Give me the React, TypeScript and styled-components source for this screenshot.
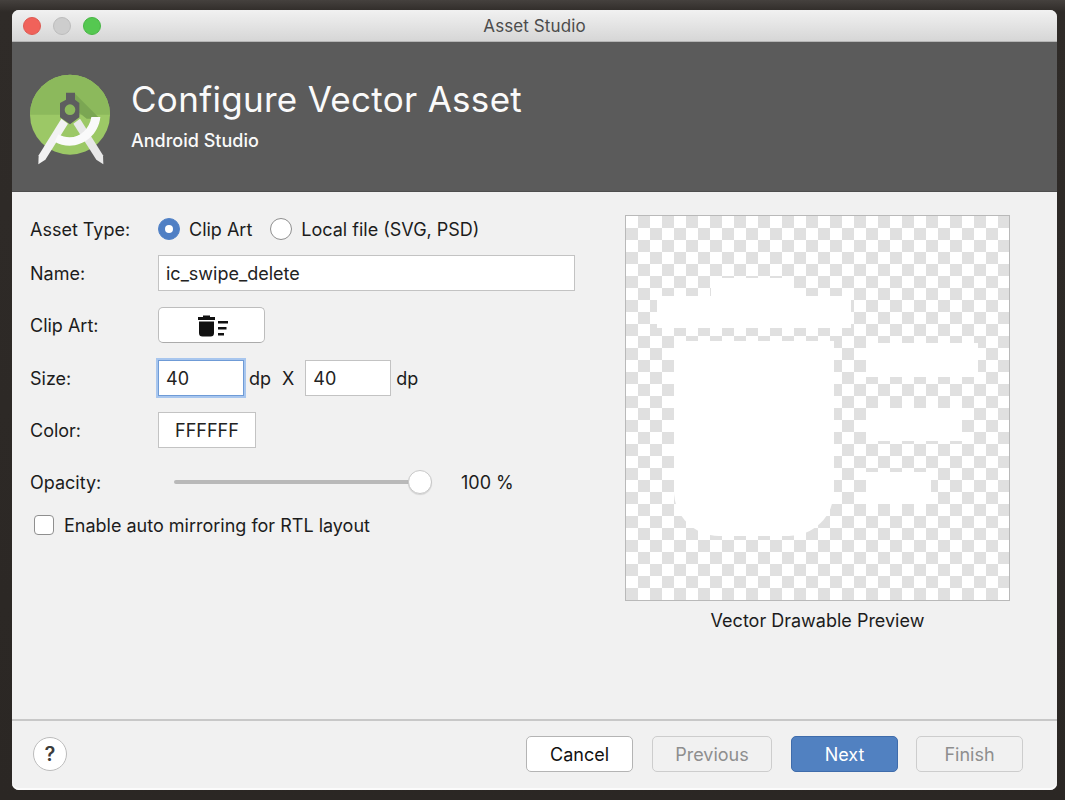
import React from "react";
import styled, { createGlobalStyle } from "styled-components";

const GlobalStyle = createGlobalStyle`
  html, body {
    margin: 0;
    background: #2b2724;
    font-family: "Inter", "Liberation Sans", sans-serif;
  }
`;

const Screen = styled.div`
  width: 1065px;
  height: 800px;
  padding: 10px 8px 10px 12px;
  box-sizing: border-box;
  background: linear-gradient(#45413e, #2f2b28 12px, #2b2724);
  overflow: hidden;
`;

const Window = styled.div`
  height: 780px;
  display: flex;
  flex-direction: column;
  border-radius: 7px;
  overflow: hidden;
  background: #f1f1f1;
  box-shadow: inset 0 -2px 0 #fbfbfb;
`;

const TitleBar = styled.div`
  height: 32px;
  flex: none;
  display: flex;
  align-items: center;
  position: relative;
  padding-left: 11px;
  gap: 12px;
  background: linear-gradient(#f1f1f1, #d6d6d6);
  border-bottom: 1px solid #b5b5b5;
  box-sizing: border-box;
`;

const TrafficLight = styled.span<{ $fill: string; $edge: string }>`
  width: 18px;
  height: 18px;
  box-sizing: border-box;
  border-radius: 50%;
  background: ${(p) => p.$fill};
  border: 1px solid ${(p) => p.$edge};
`;

const WindowTitle = styled.div`
  position: absolute;
  left: 0;
  right: 0;
  text-align: center;
  font-size: 17px;
  color: #4c4c4c;
  letter-spacing: 0.1px;
`;

const Header = styled.div`
  height: 150px;
  flex: none;
  display: flex;
  align-items: center;
  gap: 11px;
  padding-left: 8px;
  box-sizing: border-box;
  background: #5b5b5b;
  border-bottom: 1px solid #4e4e4e;
`;

const HeaderText = styled.div`
  display: flex;
  flex-direction: column;
  color: #fafafa;
  margin-top: -4px;
`;

const HeaderTitle = styled.div`
  font-size: 35px;
  line-height: 44px;
  letter-spacing: 0.3px;
`;

const HeaderSub = styled.div`
  font-size: 18px;
  line-height: 22px;
  margin-top: 9px;
  font-weight: 500;
`;

const Main = styled.div`
  flex: 1;
  display: grid;
  grid-template-columns: 613px 385px;
  padding-top: 23px;
  border-bottom: 2px solid #c8c8c8;
`;

const Form = styled.div`
  display: flex;
  flex-direction: column;
  padding-left: 18px;
`;

const Row = styled.div<{ $h: number; $gap: number }>`
  height: ${(p) => p.$h}px;
  margin-top: ${(p) => p.$gap}px;
  display: flex;
  align-items: center;
  font-size: 18px;
  color: #1c1c1c;
`;

const Label = styled.label`
  width: 128px;
  flex: none;
`;

const Radio = styled.span<{ $on?: boolean }>`
  width: 22px;
  height: 22px;
  flex: none;
  box-sizing: border-box;
  border-radius: 50%;
  background: ${(p) => (p.$on ? "#4f7fc4" : "#fff")};
  border: 1px solid ${(p) => (p.$on ? "#5484c8" : "#8f8f8f")};
  display: flex;
  align-items: center;
  justify-content: center;
  margin-right: 9px;
  &::after {
    content: "";
    width: 8px;
    height: 8px;
    border-radius: 50%;
    background: ${(p) => (p.$on ? "#fff" : "transparent")};
  }
`;

const RadioText = styled.span`
  margin-right: 18px;
`;

const Field = styled.div<{ $w: number; $focus?: boolean; $center?: boolean }>`
  width: ${(p) => p.$w}px;
  height: 36px;
  flex: none;
  box-sizing: border-box;
  background: #fff;
  border: 1px solid ${(p) => (p.$focus ? "#6f9bd6" : "#c3c3c3")};
  box-shadow: ${(p) => (p.$focus ? "0 0 0 2px #a8c6ee" : "none")};
  display: flex;
  align-items: center;
  justify-content: ${(p) => (p.$center ? "center" : "flex-start")};
  padding-left: ${(p) => (p.$center ? 0 : 7)}px;
  font-size: 18px;
  color: #222;
`;

const SizeUnit = styled.span<{ $after: number }>`
  margin: 0 ${(p) => p.$after}px 0 5px;
`;

const ClipButton = styled.button`
  width: 107px;
  height: 36px;
  padding: 0;
  box-sizing: border-box;
  background: #fff;
  border: 1px solid #bdbdbd;
  border-bottom-color: #ababab;
  border-radius: 5px;
  display: flex;
  align-items: center;
  justify-content: center;
`;

const SliderWrap = styled.div`
  width: 258px;
  margin-left: 16px;
  height: 28px;
  position: relative;
  display: flex;
  align-items: center;
`;

const SliderTrack = styled.div`
  width: 100%;
  height: 4px;
  border-radius: 2px;
  background: #b9b9b9;
`;

const SliderThumb = styled.div`
  position: absolute;
  right: 0;
  top: 2px;
  width: 24px;
  height: 24px;
  box-sizing: border-box;
  border-radius: 50%;
  background: #fff;
  border: 1px solid #c8c8c8;
  box-shadow: 0 1px 1px rgba(0, 0, 0, 0.12);
`;

const SliderValue = styled.span`
  margin-left: 29px;
`;

const Checkbox = styled.span`
  width: 20px;
  height: 20px;
  flex: none;
  margin: 0 10px 0 4px;
  box-sizing: border-box;
  background: #fff;
  border: 1px solid #8f8f8f;
  border-radius: 4px;
`;

const PreviewColumn = styled.div`
  display: flex;
  flex-direction: column;
  align-items: center;
`;

const Preview = styled.div`
  width: 385px;
  height: 386px;
  box-sizing: border-box;
  position: relative;
  border: 1px solid #b9b9b9;
  background: conic-gradient(#e0e0e0 25%, #fff 0 50%, #e0e0e0 0 75%, #fff 0) 0 0 / 24px 24px;
`;

const PreviewShape = styled.svg`
  position: absolute;
  left: 0;
  top: 0;
`;

const Caption = styled.div`
  font-size: 18px;
  color: #1c1c1c;
  margin-top: 9px;
`;

const Footer = styled.div`
  height: 69px;
  flex: none;
  display: flex;
  align-items: center;
  padding: 0 34px 3px 21px;
  box-sizing: border-box;
`;

const Help = styled.div`
  width: 34px;
  height: 34px;
  box-sizing: border-box;
  border-radius: 50%;
  background: #fff;
  border: 1px solid #bcbcbc;
  display: flex;
  align-items: center;
  justify-content: center;
  font-size: 20px;
  font-weight: 600;
  color: #3c3c3c;
  margin-right: auto;
`;

const ActionButton = styled.button<{ $w: number; $kind?: "primary" | "disabled"; $gap: number }>`
  width: ${(p) => p.$w}px;
  height: 36px;
  margin-left: ${(p) => p.$gap}px;
  padding: 0;
  box-sizing: border-box;
  border-radius: 5px;
  font-family: inherit;
  font-size: 18px;
  background: ${(p) => (p.$kind === "primary" ? "#5181c1" : p.$kind === "disabled" ? "#f1f1f1" : "#fff")};
  color: ${(p) => (p.$kind === "primary" ? "#fff" : p.$kind === "disabled" ? "#8e8e8e" : "#111")};
  border: 1px solid ${(p) => (p.$kind === "primary" ? "#3f6cab" : p.$kind === "disabled" ? "#cdcdcd" : "#b4b4b4")};
`;

const StudioLogo = () => (
  <svg width="100" height="110" viewBox="0 0 300 330">
    <circle cx="150" cy="158" r="120" fill="#9cc866" />
    <path d="M30 158a120 120 0 0 1 240 0z" fill="#8cb95c" />
    <path d="M165 95l75 75-40 0-50-40z" fill="#7ba653" />
    <path d="M138 92h27v21l13 10v43l-28 21-30-21v-43l18-10z" fill="#5d5d5f" />
    <circle cx="150" cy="143" r="16" fill="#8cb95c" />
    <path d="M124 170l20 15-68 108-21 14 1-27z" fill="#f2f2f2" />
    <path d="M180 170l-20 15 69 108 21 14-1-27z" fill="#e8e8e8" />
    <path
      d="M214 165h27c-5 52-48 86-92 86-16 0-32-4-45-12l11-22c10 6 22 9 34 9 32 0 60-26 65-61z"
      fill="#fafafa"
    />
  </svg>
);

const TrashIcon = () => (
  <svg width="32" height="26" viewBox="0 0 32 26">
    <path d="M2 5h17v3H2zM7 3.500h7V5H7z" fill="#111" />
    <path d="M3 9.500h15V21a3.500 3.500 0 0 1-3.500 3.500h-8A3.500 3.500 0 0 1 3 21z" fill="#111" />
    <path d="M22 9h10v2.500H22zM22 15h8.500v2.500H22zM22 21h6v2.500H22z" fill="#111" />
  </svg>
);

const App = () => {
  return (
    <Screen>
      <GlobalStyle />
      <Window>
        <TitleBar>
          <TrafficLight $fill="#f0625a" $edge="#dd5a52" />
          <TrafficLight $fill="#cdcdcd" $edge="#bcbcbc" />
          <TrafficLight $fill="#55c851" $edge="#48b545" />
          <WindowTitle>Asset Studio</WindowTitle>
        </TitleBar>
        <Header>
          <StudioLogo />
          <HeaderText>
            <HeaderTitle>Configure Vector Asset</HeaderTitle>
            <HeaderSub>Android Studio</HeaderSub>
          </HeaderText>
        </Header>
        <Main>
          <Form>
            <Row $h={28} $gap={0}>
              <Label>Asset Type:</Label>
              <Radio $on />
              <RadioText>Clip Art</RadioText>
              <Radio />
              <span>Local file (SVG, PSD)</span>
            </Row>
            <Row $h={36} $gap={12}>
              <Label>Name:</Label>
              <Field $w={417}>ic_swipe_delete</Field>
            </Row>
            <Row $h={36} $gap={16}>
              <Label>Clip Art:</Label>
              <ClipButton>
                <TrashIcon />
              </ClipButton>
            </Row>
            <Row $h={36} $gap={17}>
              <Label>Size:</Label>
              <Field $w={86} $focus>40</Field>
              <SizeUnit $after={11}>dp</SizeUnit>
              <span>X</span>
              <Field $w={86} style={{ marginLeft: 11 }}>40</Field>
              <SizeUnit $after={0}>dp</SizeUnit>
            </Row>
            <Row $h={36} $gap={16}>
              <Label>Color:</Label>
              <Field $w={98} $center>FFFFFF</Field>
            </Row>
            <Row $h={28} $gap={20}>
              <Label>Opacity:</Label>
              <SliderWrap>
                <SliderTrack />
                <SliderThumb />
              </SliderWrap>
              <SliderValue>100 %</SliderValue>
            </Row>
            <Row $h={28} $gap={15}>
              <Checkbox />
              <span>Enable auto mirroring for RTL layout</span>
            </Row>
          </Form>
          <PreviewColumn>
            <Preview>
              <PreviewShape width="383" height="384" viewBox="0 0 383 384">
                <g fill="#fff">
                  <path d="M31 80h54v-18h83v18h57v32H31z" />
                  <path d="M48 125h160v150a45 45 0 0 1-45 45H93a45 45 0 0 1-45-45z" />
                  <rect x="240" y="127" width="112" height="34" />
                  <rect x="240" y="192" width="96" height="33" />
                  <rect x="240" y="256" width="65" height="32" />
                </g>
              </PreviewShape>
            </Preview>
            <Caption>Vector Drawable Preview</Caption>
          </PreviewColumn>
        </Main>
        <Footer>
          <Help>?</Help>
          <ActionButton $w={107} $gap={0}>Cancel</ActionButton>
          <ActionButton $w={120} $gap={19} $kind="disabled">Previous</ActionButton>
          <ActionButton $w={107} $gap={19} $kind="primary">Next</ActionButton>
          <ActionButton $w={107} $gap={18} $kind="disabled">Finish</ActionButton>
        </Footer>
      </Window>
    </Screen>
  );
};

export default App;
